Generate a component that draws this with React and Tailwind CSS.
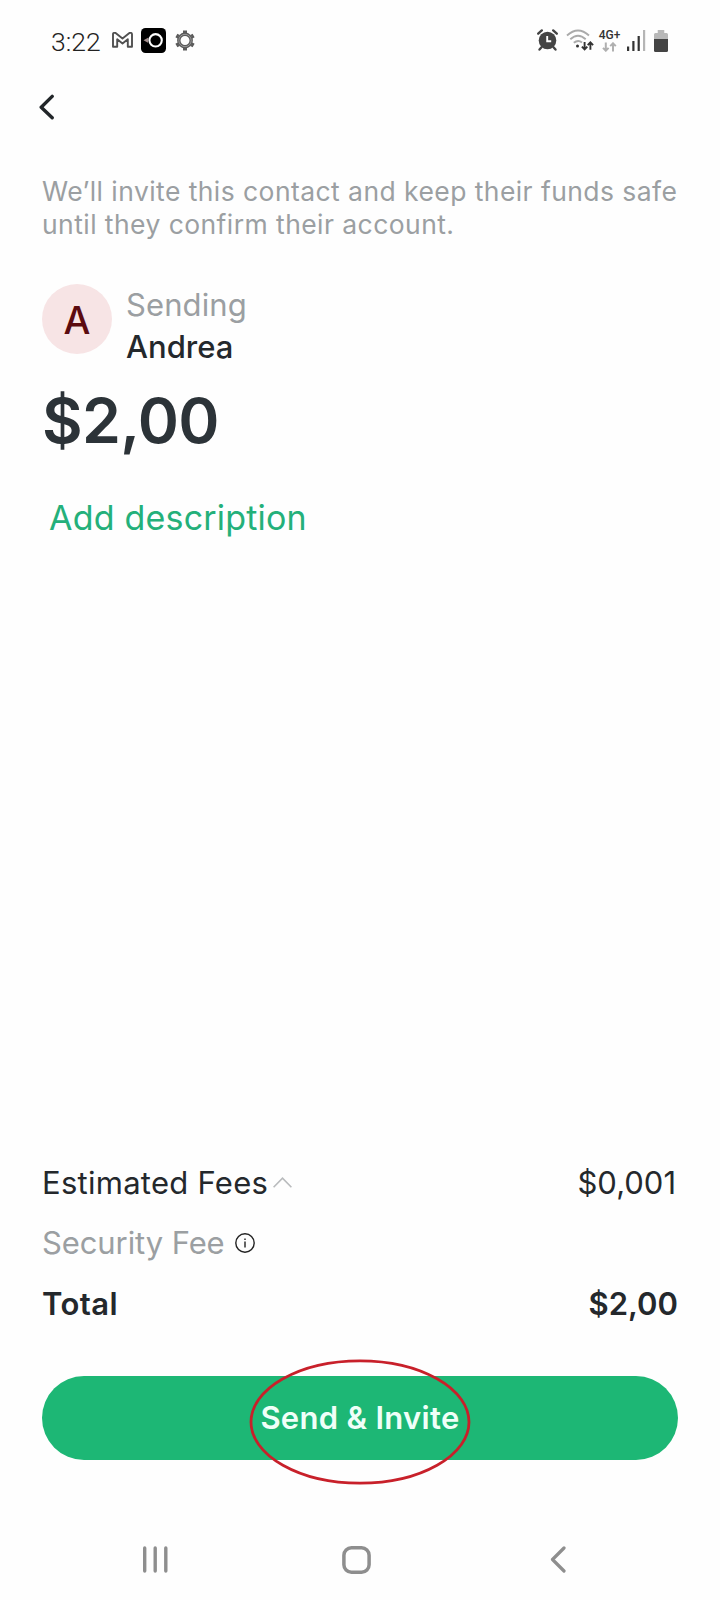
import React from 'react';

function StatusBar() {
  return (
    <div className="flex h-20 items-center justify-between pl-[51px] pr-[51px]">
      <div className="flex items-center">
        <span className="w-[61px] pt-[3px] font-[Roboto] text-[26.5px] font-light leading-[30px] text-[#222]">3:22</span>
        {/* Gmail */}
        <svg className="h-4 w-[21px]" viewBox="0 0 21 16" fill="none" stroke="#505050" strokeWidth="1.9" strokeLinejoin="round">
          <path d="M1 14.8V2.2Q1 .9 2.2 .9H3.6L10.5 6.4 17.4 .9h1.4Q20 .9 20 2.2V14.8h-4.2V7.3l-5.3 4.2-5.3-4.2v7.5z" />
        </svg>
        {/* Screen recorder */}
        <svg className="ml-2 h-[25px] w-[25px]" viewBox="0 0 25 25">
          <rect width="25" height="25" rx="4.5" fill="#000" />
          <circle cx="14.6" cy="12.3" r="6.2" fill="none" stroke="#fff" strokeWidth="2.1" />
          <path d="M2.5 12.3 7 9.8v5z" fill="#a58f8f" />
        </svg>
        {/* Settings gear */}
        <svg className="ml-[9px] h-[21px] w-[20px]" viewBox="0 0 20 21" fill="none" stroke="#5b5b5b">
          <circle cx="10" cy="10.5" r="6.2" strokeWidth="3.4" />
          <circle cx="10" cy="10.5" r="6.2" stroke="#9a9a9a" strokeWidth="1" />
          <path d="M10 .5v2.6M10 17.9v2.6M1.4 5.5 3.6 6.8M16.4 14.2l2.2 1.3M1.4 15.5l2.2-1.3M16.4 6.8l2.2-1.3" strokeWidth="4" />
        </svg>
      </div>

      <div className="flex items-center">
        {/* Alarm */}
        <svg className="h-[22px] w-[21px]" viewBox="0 0 21 22" fill="none" stroke="#444" strokeLinecap="round">
          <circle cx="10.5" cy="11.5" r="8.8" fill="#444" stroke="none" />
          <path d="M1.2 4.7 4.8 1.4M19.8 4.7 16.2 1.4M4.5 18.2 2.5 20.6M16.5 18.2l2 2.4" strokeWidth="2.3" />
          <path d="M10.2 7v5.2h4" stroke="#fff" strokeWidth="1.9" strokeLinecap="butt" />
        </svg>
        {/* Wifi */}
        <svg className="ml-2 h-[22px] w-[28px]" viewBox="0 0 28 22" fill="none" strokeWidth="1.9">
          <path d="M1 6.5Q12 -3.5 23 6.5M4.3 10.3Q12 3.3 19.7 10.3M7.8 13.8Q12 10.2 16 13.4" stroke="#aaa" />
          <circle cx="11.5" cy="17" r="1.5" fill="#333" />
          <path d="M18.6 13v7.2M15.9 17.6l2.7 2.8 2.7-2.8M24.4 20.8v-7.2M21.7 16.2l2.7-2.8 2.7 2.8" stroke="#333" />
        </svg>
        <div className="ml-[5px] flex w-[21px] flex-col items-center pt-px">
          <span className="font-[Roboto] text-[12px] font-medium leading-[12px] text-[#333]">4G+</span>
          <svg className="mt-px h-[10px] w-[15px]" viewBox="0 0 15 10" fill="none" stroke="#b0b0b0" strokeWidth="2">
            <path d="M3.8 .5v8M1 5.9l2.8 2.8 2.8-2.8M11 9.5v-8M8.2 4.1 11 1.3l2.8 2.8" />
          </svg>
        </div>
        {/* Signal */}
        <svg className="ml-[7px] mt-px h-[21px] w-[19px]" viewBox="0 0 19 21">
          <path d="M0 16.5h2.2V21H0zM5.3 11h2.2v10H5.3zM10.6 6h2.2v15h-2.2z" fill="#333" />
          <path d="M16 0h2.2v21H16z" fill="#b5b5b5" />
        </svg>
        {/* Battery */}
        <svg className="ml-2 mr-px mt-px h-[22px] w-[14px]" viewBox="0 0 15 22" preserveAspectRatio="none">
          <path d="M4 0h7v3h2.5Q15 3 15 4.5V9.5H0v-5Q0 3 1.5 3H4z" fill="#b8b8b8" />
          <path d="M0 9h15v11.5q0 1.5-1.5 1.5h-12Q0 22 0 20.5z" fill="#444" />
        </svg>
      </div>
    </div>
  );
}

function NavBar() {
  return (
    <div className="mt-[86px] flex h-7 items-center pl-[143px]">
      <svg className="h-[27px] w-[25px]" viewBox="0 0 25 27" stroke="#8e8e8e" strokeWidth="3.4" strokeLinecap="round">
        <path d="M1.7 2v23M12.2 2v23M22.8 2v23" />
      </svg>
      <svg className="ml-[174px] h-7 w-[29px]" viewBox="0 0 29 28" fill="none" stroke="#8e8e8e" strokeWidth="3.5">
        <rect x="1.9" y="1.8" width="25.2" height="24.4" rx="7.5" />
      </svg>
      <svg className="ml-[179px] h-[27px] w-4" viewBox="0 0 16 27" fill="none" stroke="#8e8e8e" strokeWidth="3.2" strokeLinecap="round" strokeLinejoin="round">
        <path d="M14 2 2.5 13.5 14 25" />
      </svg>
    </div>
  );
}

function App() {
  return (
    <div className="h-[1600px] w-[720px] overflow-hidden bg-[#fefefe] font-[Inter,sans-serif] text-[#24282c]">
      <StatusBar />

      <main className="px-[42px]">
        <button className="-ml-[3px] mt-[14px] block h-[26px] w-4">
          <svg className="h-[26px] w-4" viewBox="0 0 16 26" fill="none" stroke="#222629" strokeWidth="3.4" strokeLinecap="round" strokeLinejoin="round">
            <path d="M13.2 2.4 2.2 13.2l11 10.6" />
          </svg>
        </button>

        <p className="mt-[54.5px] whitespace-nowrap text-[26.5px] leading-[33.3px] tracking-[0.43px] text-[#9b9fa2]">
          We’ll invite this contact and keep their funds safe
          <br />
          until they confirm their account.
        </p>

        {/* Recipient */}
        <div className="mt-[42.5px] flex gap-[14px]">
          <div className="flex h-[70px] w-[70px] items-center justify-center rounded-full bg-[#f7e4e5] pt-1 text-[38px] font-[450] text-[#5c0b10]">
            A
          </div>
          <div className="text-[31px] leading-[42px]">
            <div className="tracking-[0.1px] text-[#9b9fa2]">Sending</div>
            <div className="font-medium">Andrea</div>
          </div>
        </div>

        <div className="mt-4 text-[62.5px] font-semibold leading-[72px] tracking-[-0.7px] text-[#2c3338]">$2,00</div>
        <button className="ml-[7px] mt-10 block text-[34px] leading-[44px] tracking-[0.2px] text-[#24b07a]">
          Add description
        </button>

        {/* Fees */}
        <div className="mt-[613px] text-[31px] leading-[60px]">
          <div className="flex h-15 items-center justify-between">
            <div className="flex items-center">
              <span className="tracking-[0.27px]">Estimated Fees</span>
              <svg className="ml-[5px] h-[11px] w-[19px]" viewBox="0 0 19 11" fill="none" stroke="#b9bbbd" strokeWidth="1.6">
                <path d="M.6 10.3 9.5 1.2l8.9 9.1" />
              </svg>
            </div>
            <span className="pr-0.5">$0,001</span>
          </div>
          <div className="flex h-15 items-center text-[#9b9fa2]">
            <span className="tracking-[-0.1px]">Security Fee</span>
            <svg className="ml-2.5 h-5 w-5" viewBox="0 0 20 20" fill="none" stroke="#222" strokeWidth="1.4">
              <circle cx="10" cy="10" r="9.2" />
              <path d="M10 8.4v6.2M10 5.4V7" />
            </svg>
          </div>
          <div className="flex h-15 items-center justify-between pt-0.5 font-semibold">
            <span className="tracking-[0.4px]">Total</span>
            <span>$2,00</span>
          </div>
        </div>

        <div className="relative mt-[43px]">
          <button className="block h-[84px] w-full rounded-full bg-[#1db775] text-[31px] font-semibold leading-[83px] tracking-[0.3px] text-[#effff8]">
            Send &amp; Invite
          </button>
          {/* Red highlight ring over the button */}
          <svg className="absolute -top-[17px] left-[206.5px] h-[126px] w-[222px]" viewBox="0 0 222 126" fill="none">
            <ellipse cx="111" cy="63" rx="109" ry="61.2" stroke="#c8202a" strokeWidth="2.8" />
          </svg>
        </div>
      </main>

      <NavBar />
    </div>
  );
}

export default App;
